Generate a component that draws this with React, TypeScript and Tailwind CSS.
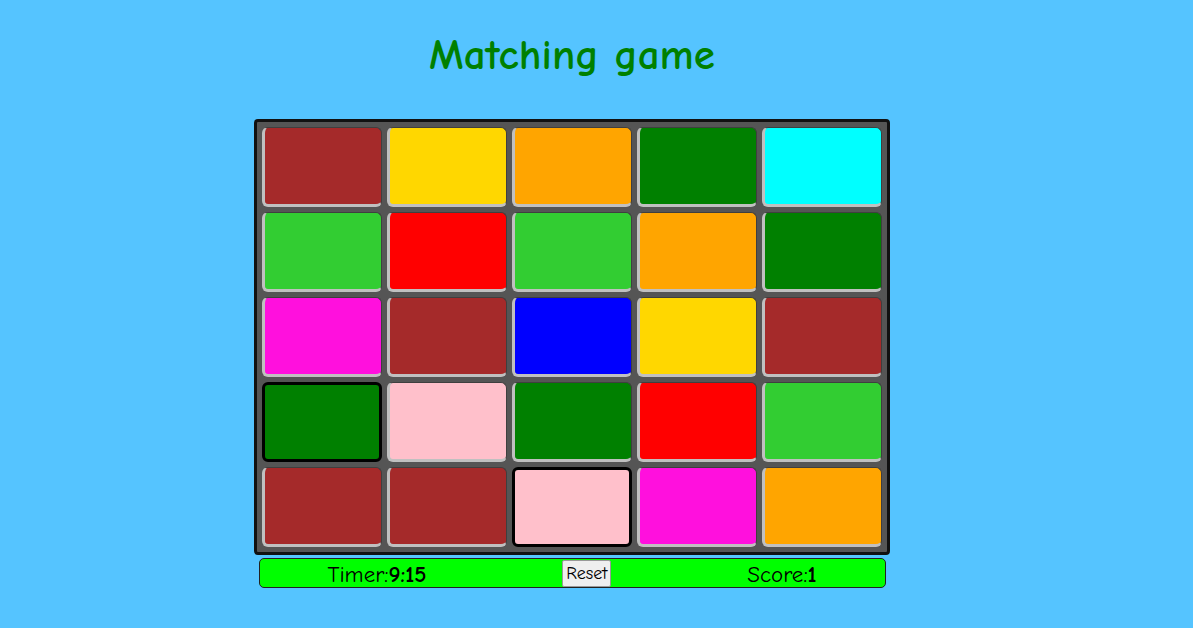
import React from "react";

const colors: string[][] = [
  ["#a52a2a", "#ffd700", "#ffa500", "#008000", "#00ffff"],
  ["#32cd32", "#ff0000", "#32cd32", "#ffa500", "#008000"],
  ["#ff10dd", "#a52a2a", "#0000ff", "#ffd700", "#a52a2a"],
  ["#008000", "#ffc0cb", "#008000", "#ff0000", "#32cd32"],
  ["#a52a2a", "#a52a2a", "#ffc0cb", "#ff10dd", "#ffa500"],
];

const selected = new Set(["3-0", "4-2"]);

function Tile({ color, sel }: { color: string; sel: boolean }) {
  if (sel) {
    return (
      <div
        className="w-[120px] h-[80px] rounded-[6px] border-[3px] border-black"
        style={{ backgroundColor: color }}
      />
    );
  }
  return (
    <div
      className="w-[120px] h-[80px] rounded-[6px] border-l-[3px] border-b-[3px] border-t border-r border-l-[#c0c0c0] border-b-[#c0c0c0] border-t-[#3f3f3f] border-r-[#3f3f3f]"
      style={{ backgroundColor: color }}
    />
  );
}

export default function App() {
  return (
    <div
      className="w-[1193px] h-[628px] bg-[#55c4ff] flex flex-col items-center pr-[49px]"
      style={{ fontFamily: '"Comic Sans MS", "Comic Neue", "DejaVu Sans", sans-serif' }}
    >
      <h1 className="mt-[28px] h-[54px] text-[43px] leading-[54px] font-bold text-[#008000]">
        Matching game
      </h1>
      <div className="mt-[37px] w-[636px] rounded-[4px] border-[3px] border-[#111] bg-[#555555] p-[5px]">
        <div className="grid grid-cols-5 gap-[5px]">
          {colors.map((row, r) =>
            row.map((c, ci) => (
              <Tile key={`${r}-${ci}`} color={c} sel={selected.has(`${r}-${ci}`)} />
            ))
          )}
        </div>
      </div>
      <div className="mt-[3px] w-[627px] h-[30px] rounded-[5px] border border-[#222] bg-[#00ff00] flex items-center justify-around text-[23px] text-black">
        <span className="leading-none pt-[2px]">
          Timer:<b>9:15</b>
        </span>
        <button className="h-[27px] px-[3px] pt-[2px] bg-[#efefef] border border-[#999] rounded-[2px] text-[18px] leading-none">
          Reset
        </button>
        <span className="leading-none pt-[2px]">
          Score:<b>1</b>
        </span>
      </div>
    </div>
  );
}
